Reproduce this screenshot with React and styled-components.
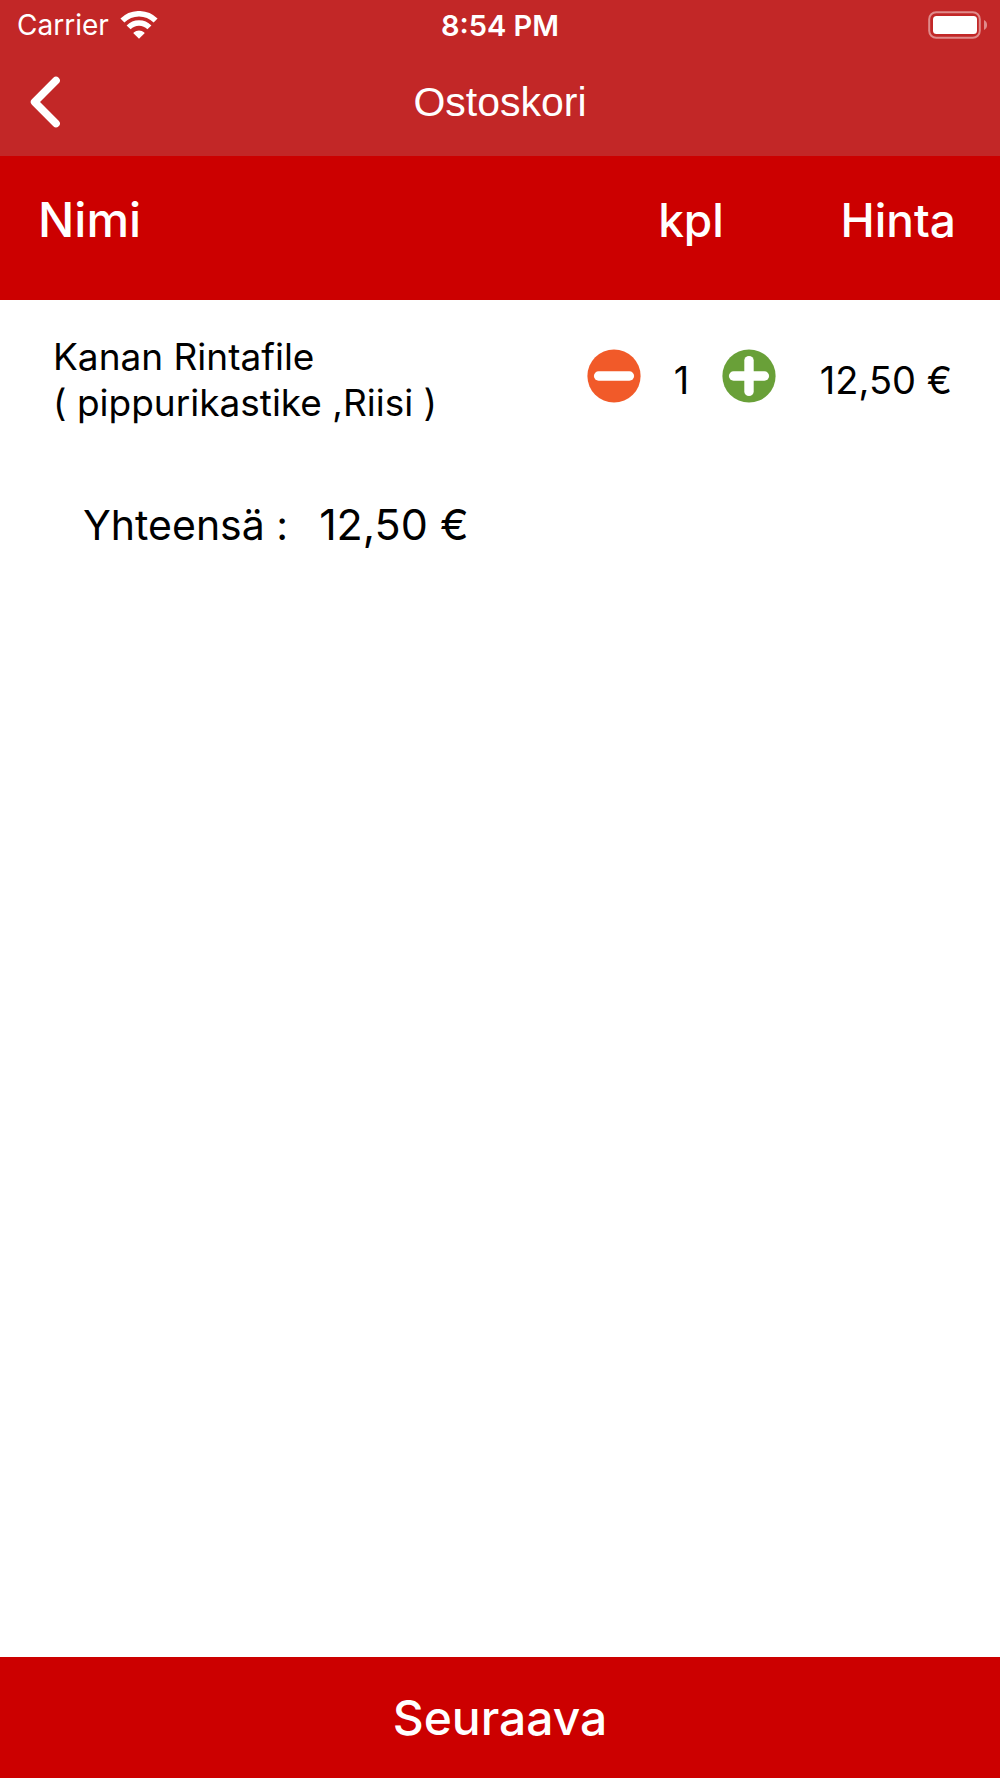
import React, { useState } from 'react';
import styled, { createGlobalStyle } from 'styled-components';

const UNIT_PRICE = 12.5;

const formatPrice = (value) => `${value.toFixed(2).replace('.', ',')} €`;

const WifiIcon = () => (
  <svg width="38" height="28" viewBox="0 0 38 28" aria-hidden="true">
    <g fill="none" stroke="#fff" strokeWidth="5.6">
      <path d="M2.4 9.6 A23.6 23.6 0 0 1 35.6 9.6" />
      <path d="M8.6 16.4 A14.6 14.6 0 0 1 29.4 16.4" />
    </g>
    <path
      d="M19 27.8 L13.7 22.6 A1 1 0 0 1 13.7 21.5 A8.2 8.2 0 0 1 24.3 21.5 A1 1 0 0 1 24.3 22.6 Z"
      fill="#fff"
    />
  </svg>
);

const BatteryIcon = () => (
  <svg width="60" height="28" viewBox="0 0 60 28" aria-hidden="true">
    <rect x="1.2" y="1.2" width="50.6" height="25.6" rx="7" fill="none" stroke="#e08b8b" strokeWidth="2" />
    <rect x="5" y="5" width="44" height="18" rx="3.5" fill="#fff" />
    <path d="M56 9 A5.6 5.6 0 0 1 56 19 Z" fill="#e08b8b" />
  </svg>
);

const BackIcon = () => (
  <svg width="30" height="52" viewBox="0 0 30 52" aria-hidden="true">
    <path
      d="M26 4.5 L4.6 26 L26 47.5"
      fill="none"
      stroke="#fff"
      strokeWidth="7.6"
      strokeLinecap="round"
      strokeLinejoin="round"
    />
  </svg>
);

const CircleIcon = ({ color, plus }) => (
  <svg width="54" height="54" viewBox="0 0 54 54" aria-hidden="true">
    <circle cx="27" cy="27" r="26.6" fill={color} />
    <g stroke="#fff" strokeWidth="9.4" strokeLinecap="round">
      <path d="M11.6 27 H42.4" />
      {plus && <path d="M27 11.6 V42.4" />}
    </g>
  </svg>
);

const App = () => {
  const [count, setCount] = useState(1);
  const total = formatPrice(count * UNIT_PRICE);

  return (
    <>
      <GlobalStyle />
      <PageStyle>
        <HeaderStyle>
          <StatusBarStyle>
            <CarrierStyle>
              Carrier
              <WifiIcon />
            </CarrierStyle>
            <ClockStyle>8:54 PM</ClockStyle>
            <BatteryStyle>
              <BatteryIcon />
            </BatteryStyle>
          </StatusBarStyle>
          <NavBarStyle>
            <BackButtonStyle type="button" aria-label="Takaisin">
              <BackIcon />
            </BackButtonStyle>
            <TitleStyle>Ostoskori</TitleStyle>
          </NavBarStyle>
        </HeaderStyle>
        <MainStyle>
          <TableStyle>
            <thead>
              <tr>
                <HeadCellStyle $size={48}>Nimi</HeadCellStyle>
                <HeadCellStyle $size={46} $width={208} $align="center">
                  kpl
                </HeadCellStyle>
                <HeadCellStyle $size={46} $width={205} $align="right">
                  Hinta
                </HeadCellStyle>
              </tr>
            </thead>
            <tbody>
              <tr>
                <NameCellStyle>
                  Kanan Rintafile
                  <br />( pippurikastike ,Riisi )
                </NameCellStyle>
                <CellStyle>
                  <CounterStyle>
                    <RoundButtonStyle
                      type="button"
                      aria-label="Vähennä"
                      onClick={() => setCount(Math.max(0, count - 1))}
                    >
                      <CircleIcon color="#f15a29" />
                    </RoundButtonStyle>
                    <CountStyle>{count}</CountStyle>
                    <RoundButtonStyle
                      type="button"
                      aria-label="Lisää"
                      onClick={() => setCount(count + 1)}
                    >
                      <CircleIcon color="#69a038" plus />
                    </RoundButtonStyle>
                  </CounterStyle>
                </CellStyle>
                <PriceCellStyle>{total}</PriceCellStyle>
              </tr>
            </tbody>
          </TableStyle>
          <TotalStyle>
            <TotalLabelStyle>Yhteensä :</TotalLabelStyle>
            <TotalPriceStyle>{total}</TotalPriceStyle>
          </TotalStyle>
        </MainStyle>
        <NextButtonStyle type="button">Seuraava</NextButtonStyle>
      </PageStyle>
    </>
  );
};

export default App;

const GlobalStyle = createGlobalStyle`
  * {
    box-sizing: border-box;
  }

  body {
    margin: 0;
    background: #fff;
    color: #000;
    font-family: Inter, 'Liberation Sans', sans-serif;
  }

  button {
    padding: 0;
    border: 0;
    background: none;
    color: inherit;
    font-family: inherit;
    cursor: pointer;
  }

  svg {
    display: block;
  }
`;

const PageStyle = styled.div`
  display: flex;
  flex-direction: column;
  min-height: 100vh;
`;

const HeaderStyle = styled.header`
  background: #c22727;
  color: #fff;
`;

const StatusBarStyle = styled.div`
  display: grid;
  grid-template-columns: 1fr auto 1fr;
  align-items: center;
  height: 50px;
  padding: 0 12px;
  font-size: 28px;
`;

const CarrierStyle = styled.div`
  display: flex;
  align-items: center;
  gap: 11px;
  padding-left: 5px;
`;

const ClockStyle = styled.div`
  font-size: 29px;
  font-weight: 600;
`;

const BatteryStyle = styled.div`
  justify-self: end;
`;

const NavBarStyle = styled.div`
  display: grid;
  grid-template-columns: 1fr auto 1fr;
  align-items: center;
  height: 106px;
  padding: 0 30px 2px;
`;

const BackButtonStyle = styled.button`
  justify-self: start;
`;

const TitleStyle = styled.h1`
  margin: 0;
  font-family: 'Liberation Sans', Arial, sans-serif;
  font-size: 41px;
  font-weight: 400;
`;

const MainStyle = styled.main`
  flex: 1;
`;

const TableStyle = styled.table`
  width: 100%;
  table-layout: fixed;
  border-collapse: collapse;
`;

const HeadCellStyle = styled.th`
  width: ${({ $width }) => ($width ? `${$width}px` : 'auto')};
  padding: 34px ${({ $align }) => ($align === 'right' ? '44px' : '0')} 50px
    ${({ $align }) => ($align ? '0' : '38px')};
  background: #cc0000;
  color: #fff;
  font-size: ${({ $size }) => $size}px;
  font-weight: 500;
  line-height: 60px;
  text-align: ${({ $align }) => $align || 'left'};
`;

const CellStyle = styled.td`
  padding: 34px 0 0;
  font-size: 38px;
  line-height: 46px;
`;

const NameCellStyle = styled(CellStyle)`
  padding-left: 53px;
  font-size: 37px;
`;

const PriceCellStyle = styled(CellStyle)`
  padding-right: 48px;
  text-align: right;
`;

const CounterStyle = styled.div`
  display: flex;
  align-items: center;
`;

const RoundButtonStyle = styled.button`
  margin-bottom: 8px;
`;

const CountStyle = styled.span`
  width: 81px;
  text-align: center;
`;

const TotalStyle = styled.div`
  display: flex;
  align-items: baseline;
  gap: 31px;
  padding: 73px 83px;
  line-height: 50px;
`;

const TotalLabelStyle = styled.span`
  font-size: 41px;
`;

const TotalPriceStyle = styled.span`
  font-size: 43px;
`;

const NextButtonStyle = styled.button`
  height: 121px;
  background: #cc0000;
  color: #fff;
  font-size: 48px;
  font-weight: 500;
`;
